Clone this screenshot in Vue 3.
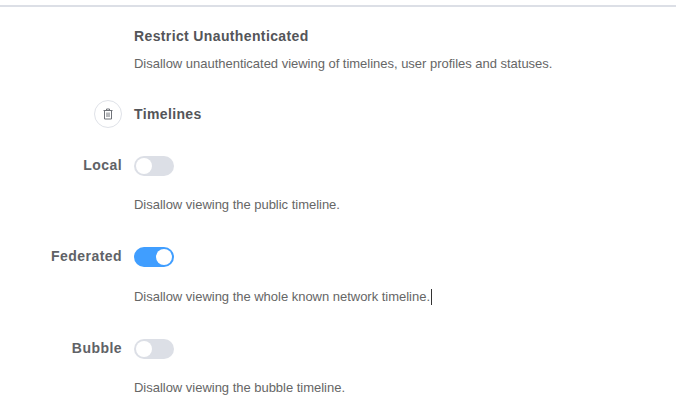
<script setup>
import { ref } from 'vue';

const settings = ref([
  { label: 'Local', on: false, desc: 'Disallow viewing the public timeline.' },
  { label: 'Federated', on: true, desc: 'Disallow viewing the whole known network timeline.' },
  { label: 'Bubble', on: false, desc: 'Disallow viewing the bubble timeline.' }
]);
</script>

<template>
  <div class="page">
    <div class="section">
      <div class="row head-row">
        <div class="label"></div>
        <div class="title">Restrict Unauthenticated</div>
      </div>
      <div class="row desc-row first">
        <div class="label"></div>
        <p class="desc">Disallow unauthenticated viewing of timelines, user profiles and statuses.</p>
      </div>
    </div>
    <div class="row group-row">
      <div class="label">
        <button class="del">
          <svg width="12" height="12" viewBox="0 0 12 12" fill="none" stroke="#6f7278" stroke-width="1">
            <path d="M1.5 2.5h9M4.5 2.5V1h3v1.5M2.5 2.5v8.5h7V2.5" />
            <path d="M5 4.5v4.5M7 4.5v4.5" />
          </svg>
        </button>
      </div>
      <div class="title">Timelines</div>
    </div>
    <div v-for="s in settings" :key="s.label" class="item">
      <div class="row switch-row">
        <div class="label">{{ s.label }}</div>
        <div class="switch" :class="{ on: s.on }" @click="s.on = !s.on"><span class="knob"></span></div>
      </div>
      <div class="row desc-row">
        <div class="label"></div>
        <p class="desc">{{ s.desc }}<span v-if="s.on" class="caret"></span></p>
      </div>
    </div>
  </div>
</template>

<style>
body {
  margin: 0;
  background: #fff;
}
</style>

<style scoped>
.page {
  width: 676px;
  height: 409px;
  overflow: hidden;
  box-sizing: border-box;
  padding-top: 5px;
  font-family: "Liberation Sans", Arial, sans-serif;
  color: #606266;
}

.section {
  border-top: 2px solid #dcdfe6;
  padding-top: 19px;
}

.row {
  display: flex;
  align-items: center;
}

.label {
  width: 122px;
  margin-right: 12px;
  flex-shrink: 0;
  display: flex;
  justify-content: flex-end;
  font-size: 14px;
  font-weight: 700;
  letter-spacing: 0.45px;
  color: #606266;
}

.title {
  font-size: 14px;
  font-weight: 700;
  letter-spacing: 0.37px;
  color: #545559;
}

.head-row {
  height: 20px;
}

.desc {
  margin: 0;
  font-size: 13px;
  line-height: 16px;
  letter-spacing: -0.02px;
  color: #666;
}

.desc-row {
  height: 16px;
}

.first {
  margin-top: 10px;
}

.group-row {
  height: 28px;
  margin-top: 28px;
  margin-bottom: 28px;
}

.del {
  width: 28px;
  height: 28px;
  padding: 0;
  background: #fff;
  border: 1px solid #dfe2e8;
  border-radius: 50%;
  display: flex;
  align-items: center;
  justify-content: center;
}

.item {
  padding-bottom: 34px;
}

.switch-row {
  height: 20px;
}

.switch-row .label {
  padding-bottom: 2px;
}

.item .desc-row {
  margin-top: 21.4px;
}

.switch {
  width: 40px;
  height: 20px;
  border-radius: 10px;
  background: #dcdfe6;
  position: relative;
  cursor: pointer;
}

.switch.on {
  background: #409eff;
}

.knob {
  position: absolute;
  top: 2px;
  left: 2px;
  width: 16px;
  height: 16px;
  border-radius: 50%;
  background: #fff;
}

.switch.on .knob {
  left: 22px;
}

.caret {
  display: inline-block;
  width: 1px;
  height: 16px;
  background: #333;
  vertical-align: top;
  margin-left: 1px;
}
</style>
